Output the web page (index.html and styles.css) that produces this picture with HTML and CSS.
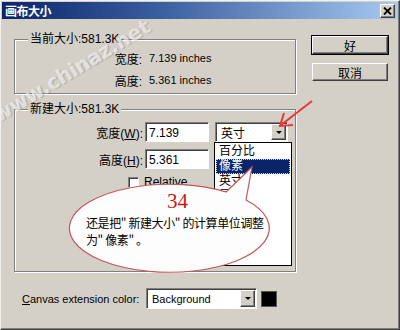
FILE: index.html
```html
<!DOCTYPE html>
<html lang="zh-CN">
<head>
    <meta charset="UTF-8">
    <title>画布大小</title>
    <link rel="stylesheet" href="styles.css">
</head>
<body>
    <div class="dialog">
        <div class="titlebar">
            <span class="title">画布大小</span>
            <span class="close-btn">
                <svg width="9" height="8" viewBox="0 0 9 8"><path d="M1 0.5 L8 7.5 M8 0.5 L1 7.5" stroke="#000" stroke-width="1.8"/></svg>
            </span>
        </div>

        <div class="dialog-body">
            <div class="main-col">
                <fieldset class="group group-current">
                    <legend>当前大小:581.3K</legend>
                    <div class="info-grid">
                        <span class="info-label">宽度:</span><span class="info-value">7.139 inches</span>
                        <span class="info-label">高度:</span><span class="info-value">5.361 inches</span>
                    </div>
                </fieldset>

                <fieldset class="group group-new">
                    <legend>新建大小:581.3K</legend>
                    <div class="field-row">
                        <span class="field-label">宽度(<u>W</u>):</span>
                        <div class="text-input">7.139</div>
                        <div class="combo unit-combo">
                            <span class="combo-text">英寸</span>
                            <span class="combo-btn"><span class="tri"></span></span>
                            <ul class="combo-list">
                                <li>百分比</li>
                                <li class="selected">像素</li>
                                <li>英寸</li>
                                <li>厘米</li>
                                <li>毫米</li>
                                <li>点</li>
                                <li>派卡</li>
                                <li>列</li>
                            </ul>
                        </div>
                    </div>
                    <div class="field-row row-gap">
                        <span class="field-label">高度(<u>H</u>):</span>
                        <div class="text-input">5.361</div>
                    </div>
                    <div class="check-row">
                        <span class="checkbox"></span>
                        <span class="check-label">Relative</span>
                    </div>
                </fieldset>

                <div class="ext-row">
                    <span class="ext-label"><u>C</u>anvas extension color:</span>
                    <div class="combo ext-combo">
                        <span class="combo-text">Background</span>
                        <span class="combo-btn"><span class="tri"></span></span>
                    </div>
                    <span class="swatch"></span>
                </div>
            </div>

            <div class="button-col">
                <div class="btn btn-default">好</div>
                <div class="btn">取消</div>
            </div>
        </div>

        <svg class="annotation" width="400" height="330" viewBox="0 0 400 330">
            <path d="M245,199 A100,44 0 1,1 225,191 L251,166 Z" fill="#fdfdfd" stroke="#c4585a" stroke-width="1.2"/>
            <path d="M311,100 L280,124" stroke="#e8383a" stroke-width="2" fill="none"/>
            <path d="M283,112 L279,125 L292,124" stroke="#e8383a" stroke-width="2" fill="none"/>
        </svg>

        <div class="bubble-text">
            <div class="bubble-num">34</div>
            <div class="bubble-line">还是把" 新建大小" 的计算单位调整</div>
            <div class="bubble-line">为" 像素" 。</div>
        </div>

        <div class="watermark">www.chinaz.net</div>
    </div>
</body>
</html>
```

FILE: styles.css
```css
body {
    margin: 0;
    font-family: "Liberation Sans", "Noto Sans CJK SC", sans-serif;
    font-size: 11px;
    color: #000;
}
.dialog {
    position: relative;
    width: 400px;
    height: 330px;
    box-sizing: border-box;
    background: #d4d0c8;
    border: 1px solid;
    border-color: #f4f2ee #404040 #404040 #f4f2ee;
    box-shadow: inset -1px -1px #808080;
    padding: 1px;
    overflow: hidden;
}
.titlebar {
    height: 17px;
    display: flex;
    align-items: center;
    justify-content: space-between;
    padding: 0 3px 0 3px;
    background: linear-gradient(to right, #0a246a, #3a5fa0 40%, #a6caf0);
}
.title {
    color: #fff;
    font-weight: bold;
    font-size: 12px;
    font-family: "Noto Sans CJK SC", sans-serif;
    letter-spacing: -0.5px;
}
.close-btn {
    width: 13px;
    height: 12px;
    display: flex;
    align-items: center;
    justify-content: center;
    background: #d4d0c8;
    border: 1px solid;
    border-color: #fff #404040 #404040 #fff;
    box-shadow: inset -1px -1px #808080;
}

.dialog-body {
    display: flex;
    padding-left: 12px;
}
.main-col {
    width: 282px;
}
.button-col {
    margin-left: 16px;
    width: 76px;
    padding-top: 17px;
}

.group {
    margin: 0;
    padding: 0;
    border: 1px solid #808080;
    box-shadow: inset 1px 1px #fff, 1px 1px #fff;
    box-sizing: border-box;
}
.group legend {
    margin-left: 13px;
    padding: 0 2px;
    line-height: 14px;
    font-size: 12px;
    background: #d4d0c8;
}
.group-current {
    margin-top: 13px;
    height: 62px;
}
.group-new {
    margin-top: 8px;
    height: 170px;
}

.info-grid {
    display: grid;
    grid-template-columns: 127px auto;
    column-gap: 7px;
    grid-auto-rows: 22px;
    align-items: center;
    padding-top: 1px;
}
.info-label {
    text-align: right;
    font-size: 12px;
}
.info-value {
    font-size: 11px;
}

.field-row {
    display: flex;
    align-items: center;
    height: 20px;
    margin-top: 6px;
}
.row-gap {
    margin-top: 7px;
}
.field-label {
    width: 128px;
    text-align: right;
    font-size: 12px;
    padding-right: 2px;
}
.text-input {
    width: 64px;
    height: 20px;
    box-sizing: border-box;
    background: #fff;
    border: 1px solid;
    border-color: #808080 #fff #fff #808080;
    box-shadow: inset 1px 1px #404040;
    padding: 3px 0 0 3px;
    font-size: 12px;
    line-height: 14px;
}

.combo {
    position: relative;
    height: 20px;
    box-sizing: border-box;
    display: flex;
    align-items: center;
    justify-content: space-between;
    background: #fff;
    border: 1px solid;
    border-color: #808080 #fff #fff #808080;
    box-shadow: inset 1px 1px #404040;
    padding: 0 1px 0 5px;
}
.combo-text {
    font-size: 12px;
}
.unit-combo {
    width: 73px;
    margin-left: 6px;
}
.combo-btn {
    width: 13px;
    height: 14px;
    display: flex;
    align-items: center;
    justify-content: center;
    background: #d4d0c8;
    border: 1px solid;
    border-color: #fff #404040 #404040 #fff;
    box-shadow: inset -1px -1px #808080;
}
.tri {
    width: 0;
    height: 0;
    border-left: 3px solid transparent;
    border-right: 3px solid transparent;
    border-top: 3px solid #000;
}
.combo-list {
    position: absolute;
    left: -2px;
    top: 19px;
    width: 74px;
    margin: 0;
    padding: 1px;
    list-style: none;
    background: #fff;
    border: 1px solid #000;
    z-index: 1;
}
.combo-list li {
    height: 15px;
    line-height: 15px;
    padding-left: 3px;
    font-size: 12px;
    box-sizing: border-box;
}
.combo-list li.selected {
    background: #0a246a;
    color: #fff;
    outline: 1px dotted #d0d0d0;
    outline-offset: -1px;
}

.check-row {
    display: flex;
    align-items: center;
    height: 14px;
    margin-top: 6px;
    padding-left: 113px;
}
.checkbox {
    width: 11px;
    height: 11px;
    box-sizing: border-box;
    background: #fff;
    border: 1px solid;
    border-color: #808080 #fff #fff #808080;
    box-shadow: inset 1px 1px #404040;
}
.check-label {
    margin-left: 5px;
    font-size: 12px;
}

.ext-row {
    display: flex;
    align-items: center;
    height: 21px;
    margin-top: 16px;
    padding-left: 8px;
}
.ext-label {
    width: 124px;
    font-size: 11px;
}
.ext-combo {
    width: 111px;
    height: 21px;
}
.ext-combo .combo-text {
    font-size: 11px;
}
.ext-combo .combo-btn {
    height: 15px;
}
.swatch {
    width: 16px;
    height: 16px;
    box-sizing: border-box;
    margin-left: 4px;
    background: #000;
    border: 1px solid #555;
}

.btn {
    height: 18px;
    box-sizing: border-box;
    display: flex;
    align-items: center;
    justify-content: center;
    font-size: 12px;
    background: #d4d0c8;
    border: 1px solid;
    border-color: #fff #404040 #404040 #fff;
    box-shadow: inset -1px -1px #808080;
    margin-bottom: 9px;
}
.btn-default {
    outline: 1px solid #000;
}

.annotation {
    position: absolute;
    left: 0;
    top: 0;
    z-index: 2;
    pointer-events: none;
}
.bubble-text {
    position: absolute;
    left: 85px;
    top: 189px;
    z-index: 3;
    font-family: "Noto Sans CJK SC", sans-serif;
    font-size: 12px;
    letter-spacing: -0.4px;
}
.bubble-num {
    font-family: "Liberation Serif", serif;
    font-size: 21px;
    line-height: 22px;
    color: #c41a1a;
    padding-left: 81px;
    margin-bottom: 2px;
    letter-spacing: 0;
}
.bubble-line {
    line-height: 17px;
}
.watermark {
    position: absolute;
    left: 0;
    top: 102px;
    z-index: 4;
    font-family: "DejaVu Sans", sans-serif;
    font-weight: bold;
    font-size: 20px;
    color: rgba(255, 255, 255, 0.6);
    text-shadow: 1px 1px 1px rgba(110, 110, 110, 0.35);
    transform: rotate(-31deg);
    transform-origin: left bottom;
    white-space: nowrap;
}
```
